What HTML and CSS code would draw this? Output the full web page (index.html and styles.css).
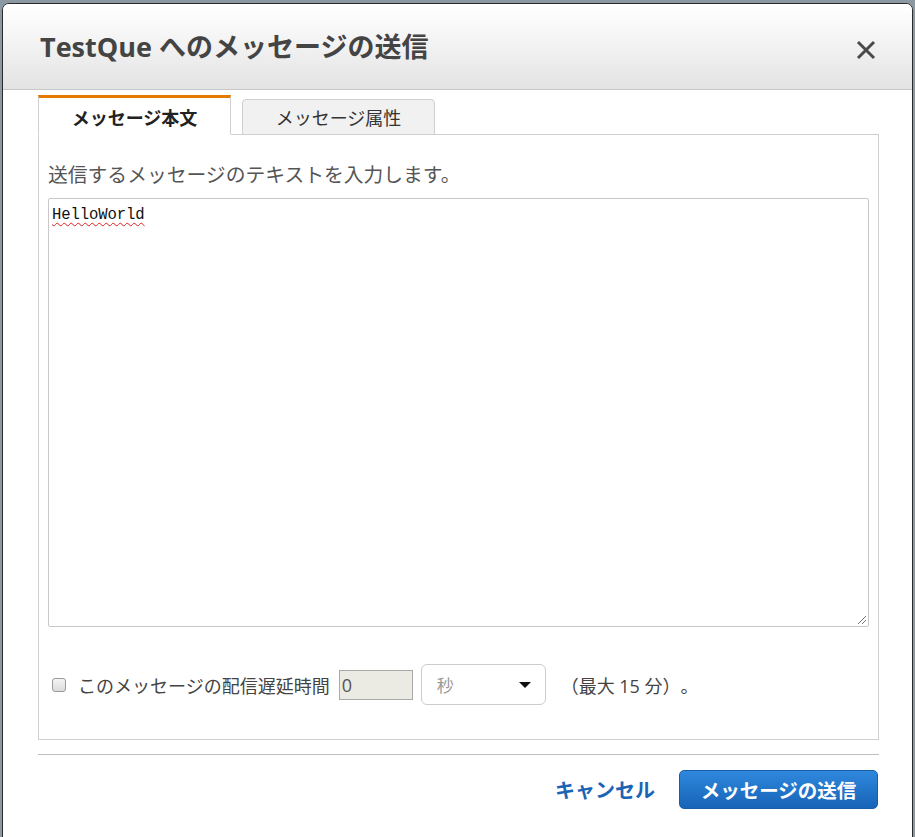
FILE: index.html
```html
<!DOCTYPE html>
<html lang="ja">
<head>
<meta charset="utf-8">
<title>TestQue へのメッセージの送信</title>
<link rel="stylesheet" href="styles.css">
</head>
<body>
<div class="dialog">
  <div class="header">
    <h1 class="title">TestQue へのメッセージの送信</h1>
    <button class="close" aria-label="close">
      <svg width="20" height="20" viewBox="0 0 20 20"><path d="M2 2 L18 18 M18 2 L2 18" stroke="#4a4a4a" stroke-width="3" fill="none"/></svg>
    </button>
  </div>
  <div class="content">
    <div class="tabs">
      <div class="tab active">メッセージ本文</div>
      <div class="tab">メッセージ属性</div>
    </div>
    <div class="panel">
      <div class="label">送信するメッセージのテキストを入力します。</div>
      <div class="textarea"><span class="typed">HelloWorld</span><span class="grip"></span></div>
      <div class="delay">
        <span class="checkbox"></span>
        <span class="delay-text">このメッセージの配信遅延時間</span>
        <span class="num">0</span>
        <span class="select"><span class="sel-val">秒</span><span class="caret"></span></span>
        <span class="max">（最大 15 分）。</span>
      </div>
    </div>
    <div class="rule"></div>
    <div class="footer">
      <a class="cancel">キャンセル</a>
      <button class="send">メッセージの送信</button>
    </div>
  </div>
</div>
</body>
</html>
```
FILE: styles.css
```css
html, body {
  margin: 0;
  padding: 0;
  height: 100%;
  overflow: hidden;
}
body {
  background: #8d99a2;
  padding: 3px 0 0 2px;
  font-family: "Open Sans", "Noto Sans CJK JP", sans-serif;
  text-spacing-trim: space-all;
}
.dialog {
  width: 911px;
  height: 900px;
  box-sizing: border-box;
  border: 1px solid #2a2a2a;
  border-radius: 7px 7px 0 0;
  background: #fff;
}
.header {
  height: 85px;
  background: linear-gradient(#ffffff 0%, #f6f6f6 35%, #e3e3e3 100%);
  border-bottom: 1px solid #c8c8c8;
  border-radius: 6px 6px 0 0;
  display: flex;
  align-items: center;
  justify-content: space-between;
  padding: 0 36px 0 37px;
}
.title {
  margin: 0;
  font-size: 27px;
  font-weight: 700;
  color: #444;
  letter-spacing: 0;
  padding-bottom: 2px;
}
.close {
  background: none;
  border: 0;
  padding: 0;
  width: 20px;
  height: 20px;
  margin-top: 6px;
}
.content {
  padding: 5px 33px 0 35px;
}
.tabs {
  display: flex;
  align-items: flex-end;
  gap: 11px;
  margin-bottom: -1px;
  position: relative;
}
.tab {
  width: 193px;
  height: 36px;
  box-sizing: border-box;
  border: 1px solid #cfcfcf;
  border-radius: 4px 4px 0 0;
  background: #f1f1f1;
  font-size: 18px;
  color: #333;
  display: flex;
  align-items: center;
  justify-content: center;
}
.tab.active {
  height: 40px;
  border-top: 3px solid #e47a00;
  border-bottom: 1px solid #fff;
  border-radius: 0;
  background: #fff;
  font-weight: 700;
  color: #222;
  padding-top: 1px;
}
.panel {
  height: 604px;
  border: 1px solid #cfcfcf;
  padding: 0 9px 0 9px;
  display: flex;
  flex-direction: column;
}
.label {
  margin-top: 27px;
  font-size: 19.8px;
  color: #555;
  line-height: 26px;
}
.textarea {
  position: relative;
  margin-top: 10px;
  height: 421px;
  border: 1px solid #c8c8c8;
  border-radius: 2px;
  padding: 3px 3px;
}
.typed {
  font-family: "Liberation Mono", "DejaVu Sans Mono", monospace;
  font-size: 15.6px;
  color: #111;
  letter-spacing: -0.1px;
  text-decoration: underline wavy #e02020;
  text-decoration-thickness: 1px;
  text-underline-offset: 3px;
}
.grip {
  position: absolute;
  right: 2px;
  bottom: 2px;
  width: 8px;
  height: 8px;
  background: linear-gradient(135deg, transparent 45%, #777 45%, #777 52%, transparent 52%, transparent 70%, #777 70%, #777 77%, transparent 77%);
}
.delay {
  display: flex;
  align-items: center;
  margin-top: 37px;
  font-size: 18px;
  color: #444;
}
.checkbox {
  width: 12px;
  height: 12px;
  border: 1px solid #9a9a9a;
  border-radius: 3px;
  background: linear-gradient(#f4f4f4, #dcdcdc);
  margin-left: 4px;
  margin-right: 12px;
}
.num {
  margin-left: 9px;
  width: 70px;
  height: 28px;
  border: 1px solid #a9a9a9;
  background: #ebebe4;
  box-sizing: content-box;
  font-size: 18px;
  color: #555;
  line-height: 28px;
  padding-left: 2px;
}
.select {
  margin-left: 8px;
  width: 125px;
  height: 41px;
  border: 1px solid #ccc;
  border-radius: 6px;
  display: flex;
  align-items: center;
  justify-content: space-between;
  padding: 0 14px 0 15px;
  box-sizing: border-box;
}
.sel-val {
  color: #999;
  font-size: 17px;
}
.caret {
  width: 0;
  height: 0;
  border-left: 6px solid transparent;
  border-right: 6px solid transparent;
  border-top: 6px solid #111;
}
.max {
  margin-left: 15px;
  font-size: 18px;
  color: #444;
}
.rule {
  margin-top: 14px;
  border-top: 1px solid #bdbdbd;
}
.footer {
  display: flex;
  justify-content: flex-end;
  align-items: center;
  gap: 24px;
  margin-top: 15px;
}
.cancel {
  font-size: 20px;
  font-weight: 700;
  color: #1b64b4;
  cursor: pointer;
}
.send {
  width: 199px;
  height: 39px;
  border: 1px solid #1a5ea8;
  border-radius: 5px;
  background: linear-gradient(#2e88dc, #1764b8);
  color: #fff;
  font-family: "Open Sans", "Noto Sans CJK JP", sans-serif;
  font-size: 19.5px;
  font-weight: 700;
  margin-right: 1px;
  padding: 0;
}
```
